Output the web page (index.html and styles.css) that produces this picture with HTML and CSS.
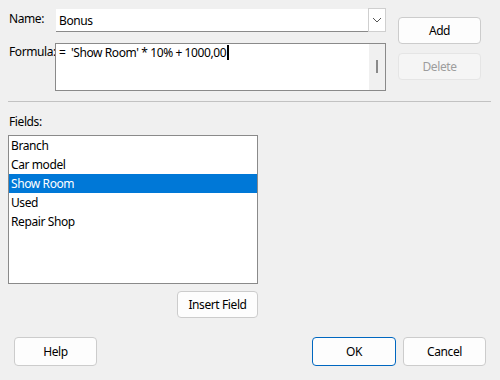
FILE: index.html
```html
<!DOCTYPE html>
<html>
<head>
<meta charset="utf-8">
<link rel="stylesheet" href="styles.css">
</head>
<body>
<div class="dialog">
  <div class="top">
    <div class="form">
      <div class="label name-label">Name:</div>
      <div class="combo">
        <span class="combo-text">Bonus</span>
        <span class="drop">
          <svg width="10" height="6" viewBox="0 0 10 6"><path d="M1 1 L5 5 L9 1" fill="none" stroke="#555" stroke-width="1"/></svg>
        </span>
      </div>
      <div class="label formula-label">Formula:</div>
      <div class="formula">
        <div class="formula-text">=&nbsp; 'Show Room' * 10% + 1000,00<span class="caret"></span></div>
        <div class="vscroll"><span class="thumb"></span></div>
      </div>
    </div>
    <div class="side">
      <button class="btn">Add</button>
      <button class="btn disabled">Delete</button>
    </div>
  </div>
  <div class="sep"></div>
  <div class="fields-label">Fields:</div>
  <div class="fields">
    <div class="list">
      <div class="item">Branch</div>
      <div class="item">Car model</div>
      <div class="item selected">Show Room</div>
      <div class="item">Used</div>
      <div class="item">Repair Shop</div>
    </div>
    <div class="insert-row">
      <button class="btn insert">Insert Field</button>
    </div>
  </div>
  <div class="bottom">
    <button class="btn help">Help</button>
    <div class="spacer"></div>
    <button class="btn ok">OK</button>
    <button class="btn cancel">Cancel</button>
  </div>
</div>
</body>
</html>
```

FILE: styles.css
```css
html, body {
  margin: 0;
  padding: 0;
}
body {
  width: 500px;
  height: 380px;
  background: #f0f0f0;
  font-family: "Noto Sans", "Open Sans", sans-serif;
  font-size: 12px;
  letter-spacing: -0.4px;
  color: #000;
  overflow: hidden;
}
.dialog {
  padding: 0 0 0 8px;
}
.top {
  display: flex;
  padding-top: 8px;
}
.form {
  display: grid;
  grid-template-columns: 47px 331px;
  row-gap: 11px;
}
.label {
  padding-left: 1px;
  line-height: 16px;
  white-space: nowrap;
}
.name-label {
  padding-top: 3px;
}
.formula-label {
  padding-top: 1px;
}
.combo {
  position: relative;
  height: 22px;
  margin-left: 1px;
  margin-top: 1px;
  background: #fff;
  border-bottom: 1px solid #8a8a8a;
  display: flex;
  align-items: center;
}
.combo-text {
  padding-left: 3px;
  flex: 1;
}
.drop {
  position: absolute;
  right: 0;
  top: -1px;
  width: 16px;
  height: 22px;
  border: 1px solid #cfcfcf;
  background: #fff;
  display: flex;
  align-items: center;
  justify-content: center;
}
.formula {
  height: 46px;
  border: 1px solid #8a8a8a;
  background: #fff;
  display: flex;
}
.formula-text {
  flex: 1;
  padding: 1px 0 0 3px;
  line-height: 16px;
  white-space: pre;
}
.caret {
  display: inline-block;
  width: 2px;
  height: 15px;
  background: #000;
  vertical-align: -3px;
  margin-left: 1px;
}
.vscroll {
  width: 16px;
  background: #f0f0f0;
  display: flex;
  justify-content: center;
  padding-top: 16px;
}
.thumb {
  width: 2px;
  height: 13px;
  background: #8a8a8a;
}
.side {
  margin-left: 12px;
  padding-top: 9px;
  display: flex;
  flex-direction: column;
  gap: 9px;
}
.btn {
  font-family: inherit;
  font-size: 12px;
  letter-spacing: inherit;
  color: #000;
  background: #fdfdfd;
  border: 1px solid #cccccc;
  border-radius: 4px;
  width: 83px;
  height: 27px;
  padding: 0;
  line-height: 16px;
}
.btn.disabled {
  background: #f5f5f5;
  border-color: #e5e5e5;
  color: #9d9d9d;
}
.sep {
  margin-top: 10px;
  width: 483px;
  height: 1px;
  background: #c2c2c2;
}
.fields-label {
  margin-top: 12px;
  padding-left: 1px;
  line-height: 16px;
}
.fields {
  width: 250px;
  margin-top: 5px;
}
.list {
  height: 147px;
  border: 1px solid #8a8a8a;
  background: #fff;
}
.item {
  height: 19px;
  line-height: 19px;
  padding-left: 2px;
}
.item.selected {
  background: #0078d7;
  color: #fff;
}
.insert-row {
  display: flex;
  justify-content: flex-end;
  margin-top: 7px;
}
.btn.insert {
  width: 81px;
}
.bottom {
  display: flex;
  margin-top: 19px;
  padding-left: 6px;
  padding-right: 14px;
}
.spacer {
  flex: 1;
}
.btn.help {
  width: 83px;
  height: 29px;
}
.btn.ok {
  width: 84px;
  height: 29px;
  border-color: #0067c0;
}
.btn.cancel {
  width: 83px;
  height: 29px;
  margin-left: 7px;
}
```
